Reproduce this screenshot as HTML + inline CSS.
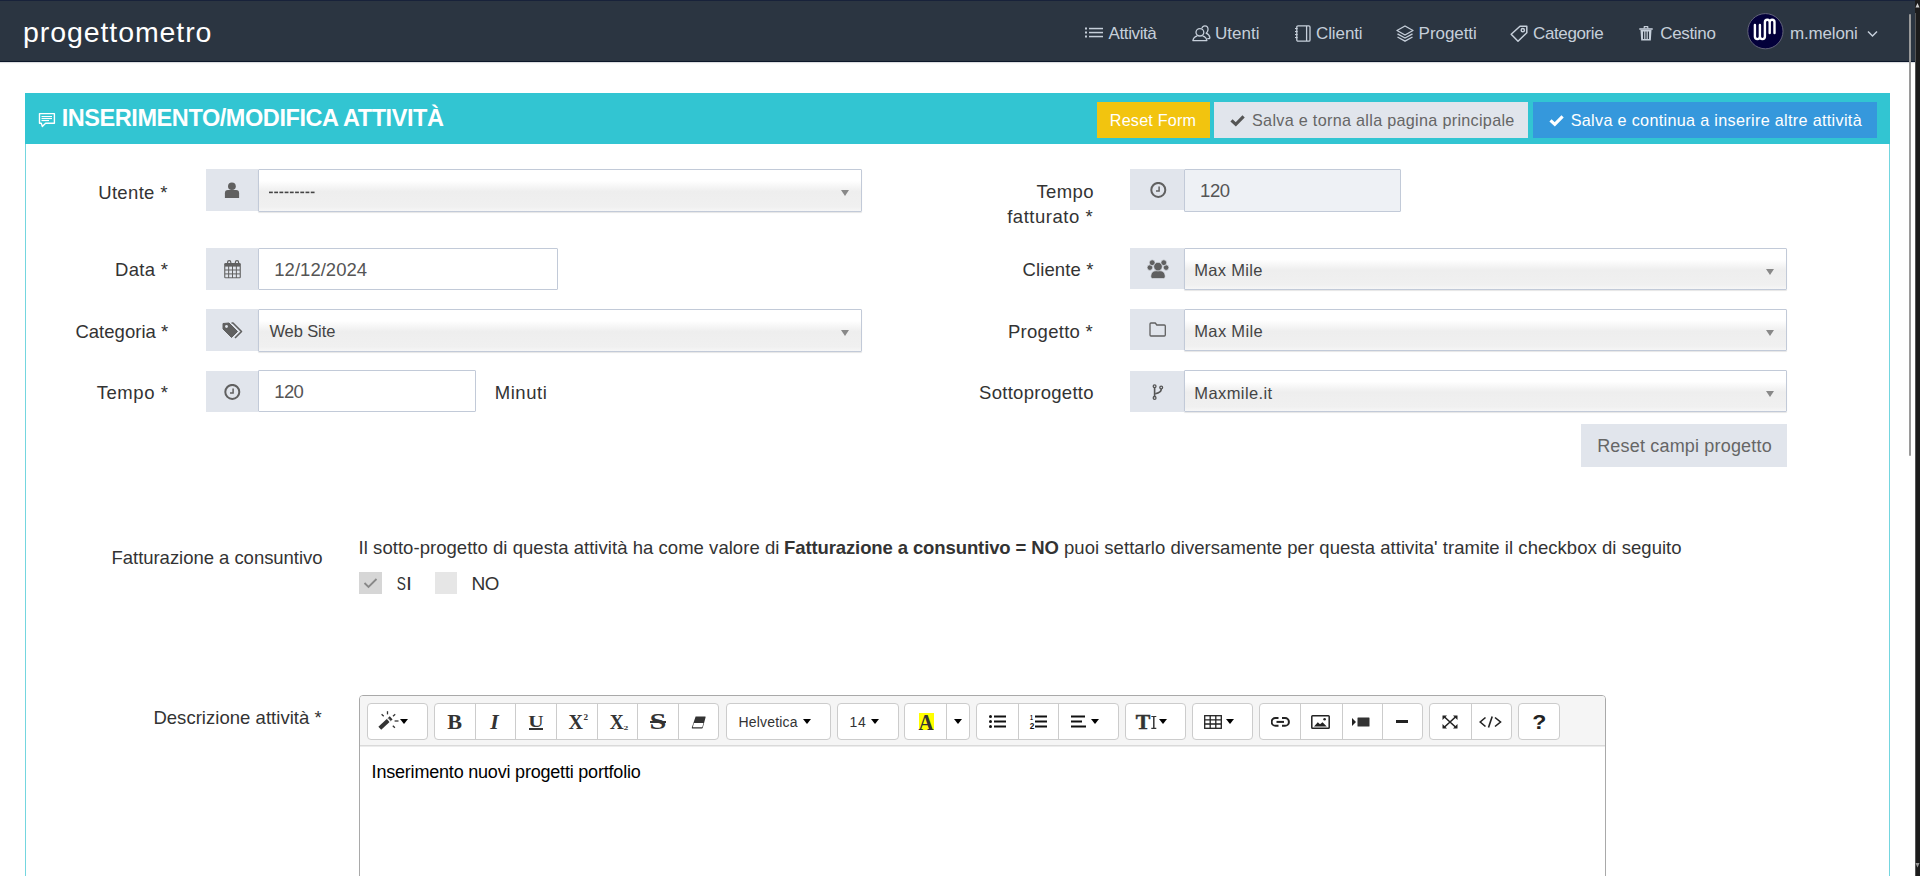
<!DOCTYPE html>
<html><head><meta charset="utf-8"><title>progettometro</title>
<style>
html,body{margin:0;padding:0;background:#fff;width:1920px;height:876px;overflow:hidden;font-family:"Liberation Sans",sans-serif}
.bx{position:absolute;display:block}
.tx{position:absolute;white-space:pre;font-family:"Liberation Sans",sans-serif}
b{font-weight:700}
</style></head><body>
<div class="bx" style="left:0px;top:0px;width:1915px;height:61px;background:#2b3541"></div>
<div class="bx" style="left:0px;top:0px;width:1915px;height:1px;background:#18223a"></div>
<div class="bx" style="left:0px;top:61px;width:1915px;height:1px;background:#0c1729"></div>
<div class="bx" style="left:0px;top:62px;width:1915px;height:1px;background:#dcdee1"></div>
<div class="bx" style="left:0px;top:63px;width:1915px;height:1px;background:#fafafa"></div>
<svg class="bx" style="left:1085px;top:27px;" width="18" height="12" viewBox="0 0 18 12"><g fill="#c6cfda"><rect x="0" y="0.5" width="2" height="2"/><rect x="0" y="4.5" width="2" height="2"/><rect x="0" y="8.5" width="2" height="2"/><rect x="4" y="0.8" width="14" height="1.5"/><rect x="4" y="4.8" width="14" height="1.5"/><rect x="4" y="8.8" width="14" height="1.5"/></g></svg>
<svg class="bx" style="left:1192px;top:25px;" width="19" height="17" viewBox="0 0 19 17"><g fill="none" stroke="#c6cfda" stroke-width="1.3" stroke-linejoin="round"><ellipse cx="7.9" cy="7.3" rx="3.9" ry="3.7"/><path d="M5.3 10.9 C3.2 11.5 1.3 12.9 0.9 15.6 L14.9 15.6 C14.5 12.9 12.6 11.5 10.5 10.9"/><path d="M9.8 3.4 C10.4 1.6 11.6 0.8 12.9 0.8 C15 0.8 16.2 2.6 16 4.8 C15.8 6.3 15.1 7.5 14.1 8.2 C15.9 8.9 17.5 10.4 17.9 12.6 C18 13.3 17.4 13.6 16.6 13.6 L15.3 13.6"/></g></svg>
<svg class="bx" style="left:1295px;top:25px;" width="16" height="17" viewBox="0 0 16 17"><g fill="none" stroke="#c6cfda" stroke-width="1.3"><rect x="1.8" y="0.8" width="13.2" height="15.4" rx="1.2"/><line x1="11.6" y1="1" x2="11.6" y2="16"/></g><g fill="#c6cfda"><rect x="0" y="3" width="2.6" height="1.1"/><rect x="0" y="6" width="2.6" height="1.1"/><rect x="0" y="9" width="2.6" height="1.1"/><rect x="0" y="12" width="2.6" height="1.1"/></g></svg>
<svg class="bx" style="left:1396px;top:25px;" width="18" height="17" viewBox="0 0 18 17"><g fill="none" stroke="#c6cfda" stroke-width="1.4" stroke-linejoin="round"><path d="M9 1 L17 5.5 L9 10 L1 5.5 Z"/><path d="M1.5 8.8 L9 13 L16.5 8.8"/><path d="M1.5 12 L9 16.2 L16.5 12"/></g></svg>
<svg class="bx" style="left:1510px;top:25px;" width="18" height="17" viewBox="0 0 18 17"><g fill="none" stroke="#c6cfda" stroke-width="1.5" stroke-linejoin="round"><path d="M10 1.2 L16.8 1.2 L16.8 7.8 L8 16.2 L1.2 9.2 Z"/><circle cx="12.8" cy="5.2" r="1.6"/></g></svg>
<svg class="bx" style="left:1639px;top:25px;" width="14" height="16" viewBox="0 0 14 16"><g fill="#c6cfda"><path d="M0.3 3.2 L13.7 3.2 L13.7 4.8 L0.3 4.8 Z"/><path d="M4.5 3.5 L4.8 1 L9.2 1 L9.5 3.5 L8.3 3.5 L8.1 2.2 L5.9 2.2 L5.7 3.5 Z"/><path d="M1.5 5 L12.5 5 L11.8 15.5 L2.2 15.5 Z M4 6.5 L4 14 L5.2 14 L5.2 6.5 Z M6.4 6.5 L6.4 14 L7.6 14 L7.6 6.5 Z M8.8 6.5 L8.8 14 L10 14 L10 6.5 Z" fill-rule="evenodd"/></g></svg>
<svg class="bx" style="left:1747px;top:13px;" width="37" height="37" viewBox="0 0 37 37"><circle cx="18.4" cy="18.2" r="17.6" fill="#03003a" stroke="#6b6b80" stroke-width="0.9"/><path d="M7.9 12 V23.6 A2.5 2.5 0 0 0 12.9 23.6 V12 M12.9 23.6 A2.5 2.5 0 0 0 17.9 23.6 V9.2 A2.4 2.4 0 0 1 22.7 9.2 V20 M22.7 9.2 A2.4 2.4 0 0 1 27.5 9.2 V20" fill="none" stroke="#fff" stroke-width="2.4" stroke-linecap="round"/></svg>
<svg class="bx" style="left:1867px;top:30px;" width="11" height="8" viewBox="0 0 11 8"><path d="M1 1.5 L5.5 6 L10 1.5" fill="none" stroke="#c6cfda" stroke-width="1.5"/></svg>
<div class="bx" style="left:25px;top:93px;width:1865px;height:783px;border:1px solid #74d6df;border-bottom:none;box-sizing:border-box;background:#fff"></div>
<div class="bx" style="left:25px;top:93px;width:1865px;height:51px;background:#32c5d2"></div>
<svg class="bx" style="left:38px;top:112px;" width="18" height="16" viewBox="0 0 18 16"><path d="M1.5 1.6 H16.4 V11.3 H7.6 L4.3 14.4 L3.3 11.3 H1.5 Z" fill="none" stroke="#fff" stroke-width="1.4" stroke-linejoin="round"/><g fill="#fff"><rect x="3.5" y="4" width="10.5" height="1.1"/><rect x="3.5" y="6" width="10.5" height="1.1"/><rect x="3.5" y="8" width="7.5" height="1.1"/></g></svg>
<div class="bx" style="left:1097px;top:102px;width:113px;height:36px;background:#f2c40f"></div>
<div class="bx" style="left:1214px;top:102px;width:314px;height:36px;background:#e1e5ec"></div>
<div class="bx" style="left:1533px;top:102px;width:344px;height:36px;background:#3598dc"></div>
<svg class="bx" style="left:1230px;top:114px;" width="15" height="13" viewBox="0 0 15 13"><path d="M1.5 6.3 L5.8 10.3 L13.6 2.3" fill="none" stroke="#555" stroke-width="3.2"/></svg>
<svg class="bx" style="left:1549px;top:114px;" width="15" height="13" viewBox="0 0 15 13"><path d="M1.5 6.3 L5.8 10.3 L13.6 2.3" fill="none" stroke="#fff" stroke-width="3.2"/></svg>
<div class="bx" style="left:206px;top:169px;width:52px;height:42px;background:#e1e5ec"></div><svg class="bx" style="left:224px;top:182px;" width="16" height="17" viewBox="0 0 16 17"><ellipse cx="7.9" cy="4.3" rx="3.9" ry="3.8" fill="#606060"/><path d="M0.9 15.9 L0.9 11.2 Q0.9 8.1 3.9 8.1 L12.1 8.1 Q15.1 8.1 15.1 11.2 L15.1 15.9 Z" fill="#606060"/></svg>
<div class="bx" style="left:258px;top:169px;width:604px;height:43px;border:1px solid #c2cad8;box-sizing:border-box;border-radius:1px;background:linear-gradient(to bottom,#fff 0%,#fff 26%,#eeeeee 53%,#f0f0f0 90%,#f6f6f6 100%);box-shadow:0 1px 1px rgba(0,0,0,0.10)"></div><div class="bx" style="left:841px;top:190px;width:0;height:0;border-left:4.5px solid transparent;border-right:4.5px solid transparent;border-top:6px solid #888"></div>
<svg class="bx" style="left:269px;top:191px;" width="48" height="3" viewBox="0 0 48 3"><rect x="0.00" y="0.6" width="3.8" height="1.6" fill="#444"/><rect x="5.22" y="0.6" width="3.8" height="1.6" fill="#444"/><rect x="10.44" y="0.6" width="3.8" height="1.6" fill="#444"/><rect x="15.66" y="0.6" width="3.8" height="1.6" fill="#444"/><rect x="20.88" y="0.6" width="3.8" height="1.6" fill="#444"/><rect x="26.10" y="0.6" width="3.8" height="1.6" fill="#444"/><rect x="31.32" y="0.6" width="3.8" height="1.6" fill="#444"/><rect x="36.54" y="0.6" width="3.8" height="1.6" fill="#444"/><rect x="41.76" y="0.6" width="3.8" height="1.6" fill="#444"/></svg>
<div class="bx" style="left:206px;top:248px;width:52px;height:42px;background:#e1e5ec"></div><svg class="bx" style="left:224px;top:260px;" width="17" height="19" viewBox="0 0 17 19"><rect x="0.2" y="3" width="16.6" height="15.3" rx="1.3" fill="#606060"/><rect x="1.3" y="6.6" width="2.85" height="2.9" fill="#e1e5ec"/><rect x="1.3" y="10.5" width="2.85" height="2.9" fill="#e1e5ec"/><rect x="1.3" y="14.4" width="2.85" height="2.9" fill="#e1e5ec"/><rect x="5.15" y="6.6" width="2.85" height="2.9" fill="#e1e5ec"/><rect x="5.15" y="10.5" width="2.85" height="2.9" fill="#e1e5ec"/><rect x="5.15" y="14.4" width="2.85" height="2.9" fill="#e1e5ec"/><rect x="9.0" y="6.6" width="2.85" height="2.9" fill="#e1e5ec"/><rect x="9.0" y="10.5" width="2.85" height="2.9" fill="#e1e5ec"/><rect x="9.0" y="14.4" width="2.85" height="2.9" fill="#e1e5ec"/><rect x="12.85" y="6.6" width="2.85" height="2.9" fill="#e1e5ec"/><rect x="12.85" y="10.5" width="2.85" height="2.9" fill="#e1e5ec"/><rect x="12.85" y="14.4" width="2.85" height="2.9" fill="#e1e5ec"/><g fill="none" stroke="#606060" stroke-width="1.2"><path d="M3.6 4 V2.2 A1.6 1.6 0 0 1 6.8 2.2 V4"/><path d="M11.4 4 V2.2 A1.6 1.6 0 0 1 14.6 2.2 V4"/></g></svg>
<div class="bx" style="left:258px;top:248px;width:300px;height:42px;border:1px solid #c2cad8;box-sizing:border-box;border-radius:1px;background:#fff"></div>
<div class="bx" style="left:206px;top:309px;width:52px;height:42px;background:#e1e5ec"></div><svg class="bx" style="left:222px;top:322px;" width="21" height="17" viewBox="0 0 21 17"><path d="M1 1.5 L1 7 L9.5 15.5 L15.5 9.5 L7 1 Z" fill="#606060" stroke="#606060" stroke-width="1" stroke-linejoin="round"/><circle cx="4.5" cy="4.5" r="1.4" fill="#e1e5ec"/><path d="M9.5 1 L11 1 L19.5 9.5 L13 16" fill="none" stroke="#606060" stroke-width="1.6" stroke-linejoin="round"/></svg>
<div class="bx" style="left:258px;top:309px;width:604px;height:43px;border:1px solid #c2cad8;box-sizing:border-box;border-radius:1px;background:linear-gradient(to bottom,#fff 0%,#fff 26%,#eeeeee 53%,#f0f0f0 90%,#f6f6f6 100%);box-shadow:0 1px 1px rgba(0,0,0,0.10)"></div><div class="bx" style="left:841px;top:330px;width:0;height:0;border-left:4.5px solid transparent;border-right:4.5px solid transparent;border-top:6px solid #888"></div>
<div class="bx" style="left:206px;top:371px;width:52px;height:41px;background:#e1e5ec"></div><svg class="bx" style="left:224px;top:384px;" width="17" height="17" viewBox="0 0 17 17"><circle cx="8.3" cy="7.9" r="7.0" fill="none" stroke="#606060" stroke-width="2"/><path d="M9.1 4.6 V9 H6" fill="none" stroke="#606060" stroke-width="1.5"/></svg>
<div class="bx" style="left:258px;top:370px;width:218px;height:42px;border:1px solid #c2cad8;box-sizing:border-box;border-radius:1px;background:#fff"></div>
<div class="bx" style="left:1130px;top:169px;width:54px;height:41px;background:#e1e5ec"></div><svg class="bx" style="left:1150px;top:182px;" width="17" height="17" viewBox="0 0 17 17"><circle cx="8.3" cy="7.9" r="7.0" fill="none" stroke="#606060" stroke-width="2"/><path d="M9.1 4.6 V9 H6" fill="none" stroke="#606060" stroke-width="1.5"/></svg>
<div class="bx" style="left:1184px;top:169px;width:217px;height:43px;border:1px solid #c2cad8;box-sizing:border-box;border-radius:1px;background:#eef1f5"></div>
<div class="bx" style="left:1130px;top:248px;width:54px;height:41px;background:#e1e5ec"></div><svg class="bx" style="left:1147px;top:259px;" width="22" height="21" viewBox="0 0 22 21"><g fill="#606060" stroke="#e1e5ec" stroke-width="0.7"><circle cx="2.9" cy="8.6" r="2.8"/><circle cx="19.1" cy="8.6" r="2.8"/><circle cx="5.2" cy="3.7" r="2.9"/><circle cx="16.8" cy="3.7" r="2.9"/><path d="M3.8 17.8 C3.8 13.3 6 11.6 11 11.6 C16 11.6 18.2 13.3 18.2 17.8 Q18.2 19.6 16.6 19.6 L5.4 19.6 Q3.8 19.6 3.8 17.8 Z"/><circle cx="11" cy="7.6" r="4.3"/></g></svg>
<div class="bx" style="left:1184px;top:248px;width:603px;height:42px;border:1px solid #c2cad8;box-sizing:border-box;border-radius:1px;background:linear-gradient(to bottom,#fff 0%,#fff 26%,#eeeeee 53%,#f0f0f0 90%,#f6f6f6 100%);box-shadow:0 1px 1px rgba(0,0,0,0.10)"></div><div class="bx" style="left:1766px;top:269px;width:0;height:0;border-left:4.5px solid transparent;border-right:4.5px solid transparent;border-top:6px solid #888"></div>
<div class="bx" style="left:1130px;top:309px;width:54px;height:41px;background:#e1e5ec"></div><svg class="bx" style="left:1149px;top:322px;" width="18" height="15" viewBox="0 0 18 15"><path d="M1 2 Q1 1 2 1 L6.3 1 L7.8 3 L15.3 3 Q16.3 3 16.3 4 L16.3 13 Q16.3 14 15.3 14 L2 14 Q1 14 1 13 Z" fill="none" stroke="#606060" stroke-width="1.3" stroke-linejoin="round"/></svg>
<div class="bx" style="left:1184px;top:309px;width:603px;height:42px;border:1px solid #c2cad8;box-sizing:border-box;border-radius:1px;background:linear-gradient(to bottom,#fff 0%,#fff 26%,#eeeeee 53%,#f0f0f0 90%,#f6f6f6 100%);box-shadow:0 1px 1px rgba(0,0,0,0.10)"></div><div class="bx" style="left:1766px;top:330px;width:0;height:0;border-left:4.5px solid transparent;border-right:4.5px solid transparent;border-top:6px solid #888"></div>
<div class="bx" style="left:1130px;top:371px;width:54px;height:41px;background:#e1e5ec"></div><svg class="bx" style="left:1152px;top:384px;" width="12" height="17" viewBox="0 0 12 17"><g fill="none" stroke="#555" stroke-width="1.3"><circle cx="2.6" cy="2.3" r="1.4"/><circle cx="9.2" cy="3.5" r="1.4"/><circle cx="2.6" cy="13.9" r="1.4"/><path d="M2.6 3.6 L2.6 12.6" stroke-width="1.6"/><path d="M9.2 4.9 V5.6 Q9.2 8.6 3.2 9.8" stroke-width="1.6"/></g></svg>
<div class="bx" style="left:1184px;top:370px;width:603px;height:42px;border:1px solid #c2cad8;box-sizing:border-box;border-radius:1px;background:linear-gradient(to bottom,#fff 0%,#fff 26%,#eeeeee 53%,#f0f0f0 90%,#f6f6f6 100%);box-shadow:0 1px 1px rgba(0,0,0,0.10)"></div><div class="bx" style="left:1766px;top:391px;width:0;height:0;border-left:4.5px solid transparent;border-right:4.5px solid transparent;border-top:6px solid #888"></div>
<div class="bx" style="left:1581px;top:424px;width:206px;height:43px;background:#e1e5ec"></div>
<div class="bx" style="left:359px;top:572px;width:23px;height:22px;background:#d6d6d6"></div>
<svg class="bx" style="left:363px;top:577px;" width="15" height="12" viewBox="0 0 15 12"><path d="M1.5 6 L5.5 10 L13.5 2" fill="none" stroke="#888" stroke-width="1.8"/></svg>
<div class="bx" style="left:435px;top:572px;width:22px;height:22px;background:#e6e6e6"></div>
<svg class="bx" style="left:0;top:0;overflow:visible" width="1" height="1"><text transform="translate(396.78,589.92) scale(0.731,1)" x="0" y="0" font-family="Liberation Sans" font-weight="400" font-style="normal" font-size="18.79" fill="#333">S</text></svg>
<svg class="bx" style="left:0;top:0;overflow:visible" width="1" height="1"><text transform="translate(406.12,589.80) scale(1.171,1)" x="0" y="0" font-family="Liberation Sans" font-weight="400" font-style="normal" font-size="18.31" fill="#333">I</text></svg>
<svg class="bx" style="left:0;top:0;overflow:visible" width="1" height="1"><text transform="translate(471.53,589.80) scale(1.046,1)" x="0" y="0" font-family="Liberation Sans" font-weight="400" font-style="normal" font-size="18.31" fill="#333">N</text></svg>
<svg class="bx" style="left:0;top:0;overflow:visible" width="1" height="1"><text transform="translate(484.71,589.92) scale(0.998,1)" x="0" y="0" font-family="Liberation Sans" font-weight="400" font-style="normal" font-size="18.79" fill="#333">O</text></svg>
<div class="bx" style="left:359px;top:695px;width:1247px;height:205px;border:1px solid #a9a9a9;border-radius:4px;box-sizing:border-box;background:#fff"></div>
<div class="bx" style="left:360px;top:696px;width:1245px;height:49px;background:#f5f5f5;border-radius:3px 3px 0 0"></div>
<div class="bx" style="left:360px;top:745px;width:1245px;height:1px;background:#dadada"></div>
<div class="bx" style="left:360px;top:746px;width:1245px;height:1px;background:#ececec"></div>
<div class="bx" style="left:367px;top:703px;width:61px;height:37px;border:1px solid #cccccc;border-radius:4px;box-sizing:border-box;background:#fff"></div>
<div class="bx" style="left:434px;top:703px;width:285px;height:37px;border:1px solid #cccccc;border-radius:4px;box-sizing:border-box;background:#fff"></div><div class="bx" style="left:475px;top:704px;width:1px;height:35px;background:#cccccc"></div><div class="bx" style="left:515px;top:704px;width:1px;height:35px;background:#cccccc"></div><div class="bx" style="left:556px;top:704px;width:1px;height:35px;background:#cccccc"></div><div class="bx" style="left:597px;top:704px;width:1px;height:35px;background:#cccccc"></div><div class="bx" style="left:637px;top:704px;width:1px;height:35px;background:#cccccc"></div><div class="bx" style="left:678px;top:704px;width:1px;height:35px;background:#cccccc"></div>
<div class="bx" style="left:726px;top:703px;width:105px;height:37px;border:1px solid #cccccc;border-radius:4px;box-sizing:border-box;background:#fff"></div>
<div class="bx" style="left:837px;top:703px;width:62px;height:37px;border:1px solid #cccccc;border-radius:4px;box-sizing:border-box;background:#fff"></div>
<div class="bx" style="left:904px;top:703px;width:66px;height:37px;border:1px solid #cccccc;border-radius:4px;box-sizing:border-box;background:#fff"></div><div class="bx" style="left:946px;top:704px;width:1px;height:35px;background:#cccccc"></div>
<div class="bx" style="left:976px;top:703px;width:143px;height:37px;border:1px solid #cccccc;border-radius:4px;box-sizing:border-box;background:#fff"></div><div class="bx" style="left:1018px;top:704px;width:1px;height:35px;background:#cccccc"></div><div class="bx" style="left:1058px;top:704px;width:1px;height:35px;background:#cccccc"></div>
<div class="bx" style="left:1125px;top:703px;width:61px;height:37px;border:1px solid #cccccc;border-radius:4px;box-sizing:border-box;background:#fff"></div>
<div class="bx" style="left:1192px;top:703px;width:61px;height:37px;border:1px solid #cccccc;border-radius:4px;box-sizing:border-box;background:#fff"></div>
<div class="bx" style="left:1259px;top:703px;width:164px;height:37px;border:1px solid #cccccc;border-radius:4px;box-sizing:border-box;background:#fff"></div><div class="bx" style="left:1300px;top:704px;width:1px;height:35px;background:#cccccc"></div><div class="bx" style="left:1342px;top:704px;width:1px;height:35px;background:#cccccc"></div><div class="bx" style="left:1382px;top:704px;width:1px;height:35px;background:#cccccc"></div>
<div class="bx" style="left:1429px;top:703px;width:83px;height:37px;border:1px solid #cccccc;border-radius:4px;box-sizing:border-box;background:#fff"></div><div class="bx" style="left:1471px;top:704px;width:1px;height:35px;background:#cccccc"></div>
<div class="bx" style="left:1518px;top:703px;width:42px;height:37px;border:1px solid #cccccc;border-radius:4px;box-sizing:border-box;background:#fff"></div>
<svg class="bx" style="left:377px;top:710px;" width="23" height="21" viewBox="0 0 23 21"><path d="M2.8 18.2 L12.5 9.3" stroke="#333" stroke-width="4.2"/><path d="M11.2 10.5 L12.2 9.6" stroke="#fff" stroke-width="4.4"/><path d="M12.6 9.2 L14.2 7.8" stroke="#333" stroke-width="4.2"/><g stroke="#333" stroke-width="1.3"><path d="M10.5 1.2 L10.5 4.4"/><path d="M4.6 4.3 L6.7 6.2"/><path d="M18.2 4.3 L16 6.3"/><path d="M17.6 11 L21.5 11"/><path d="M15.8 15.8 L17.9 17.8"/></g></svg>
<div class="bx" style="left:400px;top:719px;width:0;height:0;border-left:4px solid transparent;border-right:4px solid transparent;border-top:5px solid #000"></div>
<svg class="bx" style="left:0;top:0;overflow:visible" width="1" height="1"><text transform="translate(447.13,728.74) scale(1.056,1)" x="0" y="0" font-family="Liberation Serif" font-weight="700" font-style="normal" font-size="20.98" fill="#333">B</text></svg>
<svg class="bx" style="left:0;top:0;overflow:visible" width="1" height="1"><text transform="translate(490.21,728.80) scale(1.033,1)" x="0" y="0" font-family="Liberation Serif" font-weight="700" font-style="italic" font-size="21.08" fill="#333">I</text></svg>
<svg class="bx" style="left:0;top:0;overflow:visible" width="1" height="1"><text transform="translate(528.17,726.64) scale(1.250,1)" x="0" y="0" font-family="Liberation Serif" font-weight="700" font-style="normal" font-size="17.02" fill="#333">U</text></svg>
<div class="bx" style="left:529px;top:728px;width:14px;height:2px;background:#333"></div>
<svg class="bx" style="left:0;top:0;overflow:visible" width="1" height="1"><text transform="translate(568.53,728.60) scale(1.004,1)" x="0" y="0" font-family="Liberation Serif" font-weight="700" font-style="normal" font-size="20.01" fill="#333">X</text></svg>
<svg class="bx" style="left:0;top:0;overflow:visible" width="1" height="1"><text transform="translate(583.52,719.80) scale(1.263,1)" x="0" y="0" font-family="Liberation Serif" font-weight="700" font-style="normal" font-size="7.25" fill="#333">2</text></svg>
<svg class="bx" style="left:0;top:0;overflow:visible" width="1" height="1"><text transform="translate(609.64,728.60) scale(0.968,1)" x="0" y="0" font-family="Liberation Serif" font-weight="700" font-style="normal" font-size="20.01" fill="#333">X</text></svg>
<svg class="bx" style="left:0;top:0;overflow:visible" width="1" height="1"><text transform="translate(623.60,730.40) scale(1.725,1)" x="0" y="0" font-family="Liberation Serif" font-weight="700" font-style="normal" font-size="5.59" fill="#333">2</text></svg>
<svg class="bx" style="left:0;top:0;overflow:visible" width="1" height="1"><text transform="translate(649.38,729.18) scale(1.362,1)" x="0" y="0" font-family="Liberation Serif" font-weight="700" font-style="normal" font-size="22.33" fill="#333">S</text></svg>
<div class="bx" style="left:650px;top:721px;width:16px;height:2px;background:#333"></div>
<svg class="bx" style="left:691px;top:716px;" width="15" height="13" viewBox="0 0 15 13"><path d="M4.6 0.5 L14.2 0.5 Q14.8 0.5 14.6 1.2 L11.8 11.8 Q11.6 12.5 10.9 12.5 L1.3 12.5 Q0.6 12.5 0.8 11.8 Z" fill="#333"/><path d="M2.9 7 L12.5 7 L11.3 11.2 L1.8 11.2 Z" fill="#fff"/></svg>
<div class="bx" style="left:803px;top:719px;width:0;height:0;border-left:4px solid transparent;border-right:4px solid transparent;border-top:5px solid #000"></div>
<div class="bx" style="left:871px;top:719px;width:0;height:0;border-left:4px solid transparent;border-right:4px solid transparent;border-top:5px solid #000"></div>
<div class="bx" style="left:919px;top:713px;width:15px;height:17px;background:#ffff00"></div>
<svg class="bx" style="left:0;top:0;overflow:visible" width="1" height="1"><text transform="translate(918.50,729.50) scale(0.930,1)" x="0" y="0" font-family="Liberation Serif" font-weight="700" font-style="normal" font-size="22.42" fill="#333">A</text></svg>
<div class="bx" style="left:954px;top:719px;width:0;height:0;border-left:4px solid transparent;border-right:4px solid transparent;border-top:5px solid #000"></div>
<svg class="bx" style="left:989px;top:715px;" width="17" height="13" viewBox="0 0 17 13"><g fill="#111"><circle cx="1.5" cy="1.5" r="1.5"/><circle cx="1.5" cy="6.5" r="1.5"/><circle cx="1.5" cy="11.5" r="1.5"/><rect x="5" y="0.5" width="12" height="2"/><rect x="5" y="5.5" width="12" height="2"/><rect x="5" y="10.5" width="12" height="2"/></g></svg>
<svg class="bx" style="left:1035px;top:715px;" width="12" height="13" viewBox="0 0 12 13"><g fill="#111"><rect x="0" y="0.5" width="12" height="2"/><rect x="0" y="5.5" width="12" height="2"/><rect x="0" y="10.5" width="12" height="2"/></g></svg>
<svg class="bx" style="left:0;top:0;overflow:visible" width="1" height="1"><text transform="translate(1029.96,720.30) scale(0.697,1)" x="0" y="0" font-family="Liberation Sans" font-weight="700" font-style="normal" font-size="7.70" fill="#111">1</text></svg>
<svg class="bx" style="left:0;top:0;overflow:visible" width="1" height="1"><text transform="translate(1029.71,728.50) scale(0.967,1)" x="0" y="0" font-family="Liberation Sans" font-weight="700" font-style="normal" font-size="8.59" fill="#111">2</text></svg>
<svg class="bx" style="left:1071px;top:715px;" width="16" height="13" viewBox="0 0 16 13"><g fill="#111"><rect x="0" y="0.5" width="14" height="2"/><rect x="0" y="5.5" width="11" height="2"/><rect x="0" y="10.5" width="15" height="2"/></g></svg>
<div class="bx" style="left:1091px;top:719px;width:0;height:0;border-left:4px solid transparent;border-right:4px solid transparent;border-top:5px solid #000"></div>
<svg class="bx" style="left:0;top:0;overflow:visible" width="1" height="1"><text transform="translate(1135.66,728.80) scale(1.060,1)" x="0" y="0" font-family="Liberation Serif" font-weight="700" font-style="normal" font-size="20.62" fill="#333" stroke="#333" stroke-width="0.5">T</text></svg>
<svg class="bx" style="left:1151px;top:716px;" width="6" height="13" viewBox="0 0 6 13"><path d="M2.8 1 L2.8 12" stroke="#333" stroke-width="1.5"/><path d="M0.3 0.5 L5.3 0.5 M0.3 12.3 L5.3 12.3" stroke="#333" stroke-width="1.2"/></svg>
<div class="bx" style="left:1159px;top:719px;width:0;height:0;border-left:4px solid transparent;border-right:4px solid transparent;border-top:5px solid #000"></div>
<svg class="bx" style="left:1204px;top:715px;" width="18" height="14" viewBox="0 0 18 14"><g fill="none" stroke="#222" stroke-width="1.3"><rect x="0.7" y="0.7" width="16.6" height="12.6"/><path d="M0.7 4.8 L17.3 4.8 M0.7 9 L17.3 9 M6.2 0.7 L6.2 13.3 M11.8 0.7 L11.8 13.3"/></g></svg>
<div class="bx" style="left:1226px;top:719px;width:0;height:0;border-left:4px solid transparent;border-right:4px solid transparent;border-top:5px solid #000"></div>
<svg class="bx" style="left:1271px;top:717px;" width="19" height="10" viewBox="0 0 19 10"><g fill="none" stroke="#222" stroke-width="2"><path d="M7.5 1 L4.5 1 A3.9 3.9 0 0 0 4.5 8.8 L7.5 8.8"/><path d="M11 1 L14 1 A3.9 3.9 0 0 1 14 8.8 L11 8.8"/><path d="M5.5 4.9 L13 4.9"/></g></svg>
<svg class="bx" style="left:1311px;top:715px;" width="19" height="14" viewBox="0 0 19 14"><rect x="0.8" y="0.8" width="17.4" height="12.4" rx="0.8" fill="none" stroke="#222" stroke-width="1.5"/><path d="M3 11.5 L6.8 7.2 L9 9.3 L11.5 7.3 L15.8 11.5 Z" fill="#222"/><circle cx="13.6" cy="4.2" r="1.3" fill="#222"/></svg>
<svg class="bx" style="left:1352px;top:717px;" width="18" height="10" viewBox="0 0 18 10"><path d="M0 1 L4 5 L0 9 Z" fill="#222"/><rect x="5.5" y="0.5" width="12" height="9" rx="0.5" fill="#333"/></svg>
<div class="bx" style="left:1396px;top:720px;width:12px;height:3px;background:#222"></div>
<svg class="bx" style="left:1442px;top:715px;" width="16" height="14" viewBox="0 0 16 14"><g fill="none" stroke="#222" stroke-width="1.6"><path d="M2 1.5 L14 12.5 M14 1.5 L2 12.5"/></g><g fill="#222"><path d="M0.5 0.5 L5 0.5 L0.5 5 Z"/><path d="M15.5 0.5 L11 0.5 L15.5 5 Z"/><path d="M0.5 13.5 L5 13.5 L0.5 9 Z"/><path d="M15.5 13.5 L11 13.5 L15.5 9 Z"/></g></svg>
<svg class="bx" style="left:1479px;top:716px;" width="23" height="12" viewBox="0 0 23 12"><g fill="none" stroke="#222" stroke-width="1.6"><path d="M6.5 1.5 L1.2 6 L6.5 10.5"/><path d="M16 1.5 L21.5 6 L16 10.5"/><path d="M13.2 0.5 L9.5 11.5"/></g></svg>
<svg class="bx" style="left:0;top:0;overflow:visible" width="1" height="1"><text transform="translate(1532.24,729.00) scale(1.150,1)" x="0" y="0" font-family="Liberation Sans" font-weight="700" font-style="normal" font-size="20.05" fill="#222">?</text></svg>
<div class="bx" style="left:1915px;top:0px;width:5px;height:876px;background:#1c1c1c"></div>
<div class="bx" style="left:1909px;top:14px;width:2px;height:442px;background:#9a9a9a;border-radius:1px"></div>
<div class="bx" style="left:1915px;top:13px;width:1px;height:863px;background:#555"></div>
<svg class="bx" style="left:1914px;top:1px;" width="6" height="8" viewBox="0 0 6 8"><path d="M1.5 6.5 L3.5 2 L5.5 6.5 Z" fill="#cfcfcf"/></svg>
<svg class="bx" style="left:1914px;top:861px;" width="6" height="8" viewBox="0 0 6 8"><path d="M1.5 2 L5.5 2 L3.5 6.5 Z" fill="#9a9a9a"/></svg>
<div class="tx" style="left:23.00px;top:17.87px;font-size:28.5px;line-height:28.5px;font-weight:400;color:#ffffff;letter-spacing:0.917px;">progettometro</div>
<div class="tx" style="left:1108.60px;top:25.21px;font-size:17px;line-height:17px;font-weight:400;color:#c6cfda;letter-spacing:-0.400px;">Attività</div>
<div class="tx" style="left:1215.00px;top:25.21px;font-size:17px;line-height:17px;font-weight:400;color:#c6cfda;letter-spacing:0.000px;">Utenti</div>
<div class="tx" style="left:1316.00px;top:25.21px;font-size:17px;line-height:17px;font-weight:400;color:#c6cfda;letter-spacing:-0.100px;">Clienti</div>
<div class="tx" style="left:1418.60px;top:25.21px;font-size:17px;line-height:17px;font-weight:400;color:#c6cfda;letter-spacing:-0.057px;">Progetti</div>
<div class="tx" style="left:1533.00px;top:25.21px;font-size:17px;line-height:17px;font-weight:400;color:#c6cfda;letter-spacing:-0.375px;">Categorie</div>
<div class="tx" style="left:1660.20px;top:25.21px;font-size:17px;line-height:17px;font-weight:400;color:#c6cfda;letter-spacing:-0.333px;">Cestino</div>
<div class="tx" style="left:1790.00px;top:24.81px;font-size:17px;line-height:17px;font-weight:400;color:#c6cfda;letter-spacing:-0.157px;">m.meloni</div>
<div class="tx" style="left:61.70px;top:107.31px;font-size:23.5px;line-height:23.5px;font-weight:700;color:#ffffff;letter-spacing:-0.429px;">INSERIMENTO/MODIFICA ATTIVITÀ</div>
<div class="tx" style="left:1109.80px;top:112.49px;font-size:16.2px;line-height:16.2px;font-weight:400;color:#ffffff;letter-spacing:0.189px;">Reset Form</div>
<div class="tx" style="left:1252.00px;top:112.49px;font-size:16.2px;line-height:16.2px;font-weight:400;color:#666666;letter-spacing:0.297px;">Salva e torna alla pagina principale</div>
<div class="tx" style="left:1570.70px;top:112.49px;font-size:16.2px;line-height:16.2px;font-weight:400;color:#ffffff;letter-spacing:0.315px;">Salva e continua a inserire altre attività</div>
<div class="tx" style="left:98.20px;top:183.54px;font-size:18.5px;line-height:18.5px;font-weight:400;color:#333333;letter-spacing:0.343px;">Utente *</div>
<div class="tx" style="left:115.00px;top:261.34px;font-size:18.5px;line-height:18.5px;font-weight:400;color:#333333;letter-spacing:0.320px;">Data *</div>
<div class="tx" style="left:75.40px;top:322.74px;font-size:18.5px;line-height:18.5px;font-weight:400;color:#333333;letter-spacing:0.030px;">Categoria *</div>
<div class="tx" style="left:96.70px;top:383.54px;font-size:18.5px;line-height:18.5px;font-weight:400;color:#333333;letter-spacing:0.567px;">Tempo *</div>
<div class="tx" style="left:1036.40px;top:182.94px;font-size:18.5px;line-height:18.5px;font-weight:400;color:#333333;letter-spacing:0.400px;">Tempo</div>
<div class="tx" style="left:1007.20px;top:207.94px;font-size:18.5px;line-height:18.5px;font-weight:400;color:#333333;letter-spacing:0.520px;">fatturato *</div>
<div class="tx" style="left:1022.40px;top:261.14px;font-size:18.5px;line-height:18.5px;font-weight:400;color:#333333;letter-spacing:0.150px;">Cliente *</div>
<div class="tx" style="left:1008.00px;top:322.84px;font-size:18.5px;line-height:18.5px;font-weight:400;color:#333333;letter-spacing:0.278px;">Progetto *</div>
<div class="tx" style="left:979.00px;top:384.34px;font-size:18.5px;line-height:18.5px;font-weight:400;color:#333333;letter-spacing:0.292px;">Sottoprogetto</div>
<div class="tx" style="left:274.30px;top:260.54px;font-size:18.5px;line-height:18.5px;font-weight:400;color:#555555;letter-spacing:0.022px;">12/12/2024</div>
<div class="tx" style="left:274.30px;top:383.14px;font-size:18.5px;line-height:18.5px;font-weight:400;color:#555555;letter-spacing:-0.700px;">120</div>
<div class="tx" style="left:1200.00px;top:181.94px;font-size:18.5px;line-height:18.5px;font-weight:400;color:#555555;letter-spacing:-0.400px;">120</div>
<div class="tx" style="left:269.40px;top:323.03px;font-size:16.5px;line-height:16.5px;font-weight:400;color:#444444;letter-spacing:-0.100px;">Web Site</div>
<div class="tx" style="left:1194.20px;top:262.03px;font-size:16.5px;line-height:16.5px;font-weight:400;color:#444444;letter-spacing:0.329px;">Max Mile</div>
<div class="tx" style="left:1194.30px;top:323.23px;font-size:16.5px;line-height:16.5px;font-weight:400;color:#444444;letter-spacing:0.329px;">Max Mile</div>
<div class="tx" style="left:1194.30px;top:385.23px;font-size:16.5px;line-height:16.5px;font-weight:400;color:#444444;letter-spacing:0.400px;">Maxmile.it</div>
<div class="tx" style="left:494.80px;top:384.04px;font-size:18.5px;line-height:18.5px;font-weight:400;color:#333333;letter-spacing:0.520px;">Minuti</div>
<div class="tx" style="left:1597.20px;top:436.56px;font-size:18px;line-height:18px;font-weight:400;color:#666666;letter-spacing:0.179px;">Reset campi progetto</div>
<div class="tx" style="left:111.50px;top:549.34px;font-size:18.5px;line-height:18.5px;font-weight:400;color:#333333;letter-spacing:-0.033px;">Fatturazione a consuntivo</div>
<div class="tx" style="left:358.60px;top:539.34px;font-size:18.5px;line-height:18.5px;font-weight:400;color:#333333;letter-spacing:0.042px;">Il sotto-progetto di questa attività ha come valore di</div>
<div class="tx" style="left:784.00px;top:539.34px;font-size:18.5px;line-height:18.5px;font-weight:700;color:#333333;letter-spacing:-0.107px;">Fatturazione a consuntivo = NO</div>
<div class="tx" style="left:1064.00px;top:539.34px;font-size:18.5px;line-height:18.5px;font-weight:400;color:#333333;letter-spacing:0.042px;">puoi settarlo diversamente per questa attivita' tramite il checkbox di seguito</div>
<div class="tx" style="left:153.40px;top:709.34px;font-size:18.5px;line-height:18.5px;font-weight:400;color:#333333;letter-spacing:0.033px;">Descrizione attività *</div>
<div class="tx" style="left:738.40px;top:714.75px;font-size:14px;line-height:14px;font-weight:400;color:#333333;letter-spacing:0.200px;">Helvetica</div>
<div class="tx" style="left:849.40px;top:714.75px;font-size:14px;line-height:14px;font-weight:400;color:#333333;letter-spacing:0.700px;">14</div>
<div class="tx" style="left:371.60px;top:762.56px;font-size:18px;line-height:18px;font-weight:400;color:#000000;letter-spacing:-0.200px;">Inserimento nuovi progetti portfolio</div>
</body></html>
